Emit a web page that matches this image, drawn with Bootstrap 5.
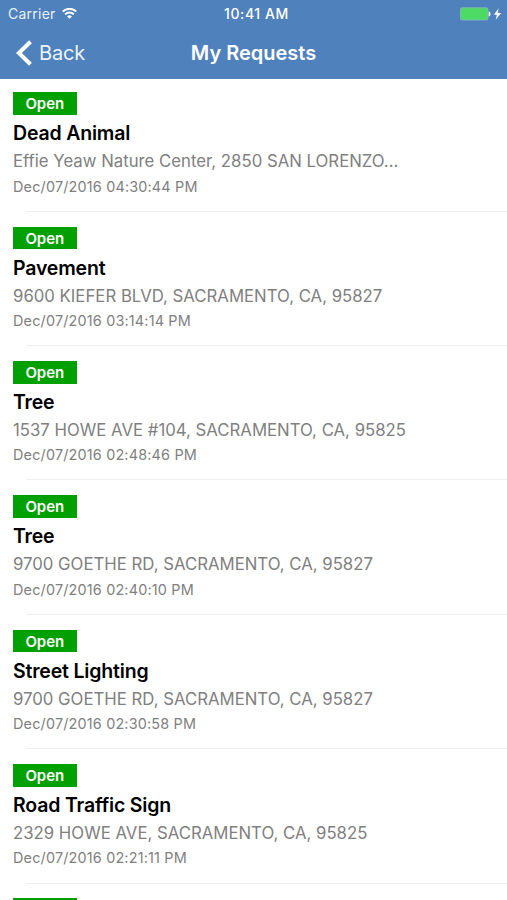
<!DOCTYPE html>
<html lang="en">
<head>
<meta charset="utf-8">
<meta name="viewport" content="width=device-width, initial-scale=1">
<title>My Requests</title>
<link href="https://cdn.jsdelivr.net/npm/bootstrap@5.3.0/dist/css/bootstrap.min.css" rel="stylesheet">
<style>
body { font-family: Inter, "Liberation Sans", sans-serif; color: #000; height: 900px; overflow: hidden; background: #fff; }
.top-area { background: #4f81bd; height: 79px; color: #fff; }
.status-line { height: 27px; padding: 0 5px 0 8px; font-size: 14px; line-height: 27px; }
.status-line .side { flex: 1 1 0; }
.carrier { letter-spacing: .25px; color: #e9f0fa; }
.clock { font-weight: 500; letter-spacing: .6px; margin-left: 3px; }
.title-line { height: 52px; padding: 0 15px; }
.title-line .side { flex: 1 1 0; }
.back-link { color: #eaf3ff; font-size: 20px; line-height: 52px; letter-spacing: -.2px; }
.back-text { padding-left: 2px; }
.page-title { font-size: 20px; font-weight: 600; line-height: 52px; }
.request-list { height: 821px; }
.request { height: 134.35px; padding: 14.9px 0 0 13px; position: relative; }
.request:first-child { height: 132.8px; padding-top: 13.3px; }
.request::after { content: ""; position: absolute; left: 26px; right: 0; bottom: 0; height: 1px; background: #eee; }
.state { width: 63.5px; height: 22.6px; background: #00a000; color: #fff; font-size: 15px; font-weight: 600; line-height: 23.6px; letter-spacing: -.05px; }
.subject { font-size: 19.5px; font-weight: 600; line-height: 26px; margin-top: 5.4px; letter-spacing: -.18px; }
.place { font-size: 16.75px; line-height: 24px; margin-top: 3.1px; color: #808080; width: 420px; }
.stamp { font-size: 14.4px; line-height: 20px; margin-top: 3.2px; color: #808080; letter-spacing: .18px; }
</style>
<script src="https://cdn.jsdelivr.net/npm/bootstrap@5.3.0/dist/js/bootstrap.bundle.min.js"></script>
</head>
<body>
<header class="top-area">
  <div class="status-line d-flex align-items-center">
    <div class="side d-flex align-items-center">
      <span class="carrier">Carrier</span>
      <svg class="ms-1" width="17" height="12" viewBox="-2 .6 17 12" fill="none" stroke="#fff" stroke-width="1.9"><path d="M.7 4.2a9.6 9.6 0 0 1 13.6 0M3.1 6.9a6.2 6.2 0 0 1 8.8 0"/><path d="M7.5 11.4 5.1 9a3.4 3.4 0 0 1 4.8 0z" fill="#fff" stroke="none"/></svg>
    </div>
    <span class="clock">10:41 AM</span>
    <div class="side d-flex align-items-center justify-content-end">
      <svg width="42" height="14" viewBox="0 0 42 14"><rect x=".5" y=".8" width="27.5" height="12.2" rx="1.5" fill="#4cd964" stroke="#8bb8c0" stroke-width=".8"/><path d="M28.7 4.5c2.3.3 2.3 4.7 0 5z" fill="#fff"/><path d="M38.6 1.2 34 7.8h2.9l-1.2 4.9 5.4-6.8h-3.3z" fill="#fff"/></svg>
    </div>
  </div>
  <nav class="title-line d-flex align-items-center">
    <div class="side">
      <a href="#" class="back-link d-inline-flex align-items-center text-decoration-none">
        <svg width="18" height="26" viewBox="0 0 18 26" fill="none" stroke="#fff" stroke-width="4"><path d="M15.5 1.8 3.9 13l11.6 11.2"/></svg>
        <span class="back-text ms-1">Back</span>
      </a>
    </div>
    <h1 class="page-title mb-0">My Requests</h1>
    <div class="side"></div>
  </nav>
</header>
<main class="request-list overflow-hidden">
  <article class="request"><div class="state text-center">Open</div><h2 class="subject mb-0"><span>Dead Animal</span></h2><div class="place text-truncate"><span>Effie Yeaw Nature Center, 2850 SAN LORENZO...</span></div><div class="stamp"><span>Dec/07/2016 04:30:44 PM</span></div></article>
  <article class="request"><div class="state text-center">Open</div><h2 class="subject mb-0"><span>Pavement</span></h2><div class="place text-truncate"><span>9600 KIEFER BLVD, SACRAMENTO, CA, 95827</span></div><div class="stamp"><span>Dec/07/2016 03:14:14 PM</span></div></article>
  <article class="request"><div class="state text-center">Open</div><h2 class="subject mb-0"><span>Tree</span></h2><div class="place text-truncate"><span>1537 HOWE AVE #104, SACRAMENTO, CA, 95825</span></div><div class="stamp"><span>Dec/07/2016 02:48:46 PM</span></div></article>
  <article class="request"><div class="state text-center">Open</div><h2 class="subject mb-0"><span>Tree</span></h2><div class="place text-truncate"><span>9700 GOETHE RD, SACRAMENTO, CA, 95827</span></div><div class="stamp"><span>Dec/07/2016 02:40:10 PM</span></div></article>
  <article class="request"><div class="state text-center">Open</div><h2 class="subject mb-0"><span>Street Lighting</span></h2><div class="place text-truncate"><span>9700 GOETHE RD, SACRAMENTO, CA, 95827</span></div><div class="stamp"><span>Dec/07/2016 02:30:58 PM</span></div></article>
  <article class="request"><div class="state text-center">Open</div><h2 class="subject mb-0"><span>Road Traffic Sign</span></h2><div class="place text-truncate"><span>2329 HOWE AVE, SACRAMENTO, CA, 95825</span></div><div class="stamp"><span>Dec/07/2016 02:21:11 PM</span></div></article>
  <article class="request"><div class="state"></div></article>
</main>
</body>
</html>
